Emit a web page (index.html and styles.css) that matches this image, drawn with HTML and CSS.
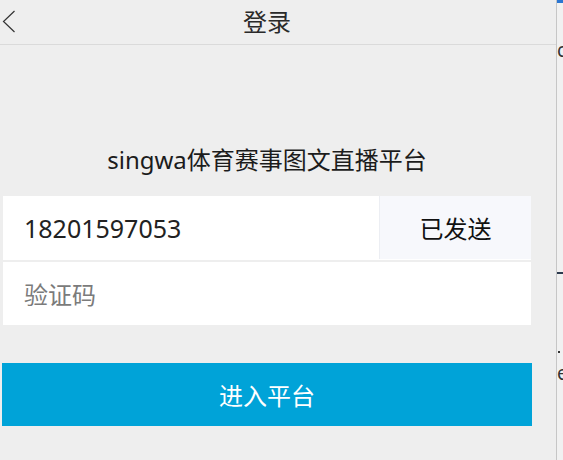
FILE: index.html
```html
<!DOCTYPE html>
<html lang="zh-CN">
<head>
<meta charset="utf-8">
<title>登录</title>
<link rel="stylesheet" href="styles.css">
</head>
<body>
<div class="screen">
  <main class="app">
    <header class="topbar">
      <div class="topbar-inner">
        <span class="back">
          <svg width="14" height="24" viewBox="0 0 14 24"><polyline points="12.5,1 1.5,11.5 12.5,22" fill="none" stroke="#333" stroke-width="1.2"/></svg>
        </span>
        <h1 class="topbar-title">登录</h1>
      </div>
    </header>
    <section class="content">
      <h2 class="brand">singwa体育赛事图文直播平台</h2>
      <div class="form">
        <div class="field field-phone">
          <span class="field-value">18201597053</span>
          <span class="send">已发送</span>
        </div>
        <div class="field field-code">
          <span class="placeholder">验证码</span>
        </div>
      </div>
      <button class="submit">进入平台</button>
    </section>
  </main>
  <div class="divider"></div>
  <aside class="side">
    <div class="side-bar"></div>
    <div class="side-c">c</div>
    <div class="side-dash"></div>
    <div class="side-dot"></div>
    <div class="side-e">e</div>
  </aside>
</div>
</body>
</html>
```

FILE: styles.css
```css
* { box-sizing: border-box; }
html, body {
  margin: 0;
  padding: 0;
  background: #efefef;
}
body {
  font-family: "Noto Sans", "Noto Sans CJK SC", sans-serif;
  color: #222;
}
.screen {
  display: flex;
  width: 563px;
  height: 460px;
  overflow: hidden;
}
.app {
  width: 556px;
  flex: none;
  background: #eeeeee;
}
.topbar {
  height: 45px;
  border-bottom: 1px solid #dadada;
}
.topbar-inner {
  width: 534px;
  height: 44px;
  display: flex;
  align-items: center;
  justify-content: center;
  position: relative;
}
.back {
  position: absolute;
  left: 2px;
  top: 10px;
  display: flex;
}
.topbar-title {
  margin: 0;
  font-size: 24px;
  font-weight: normal;
  line-height: 44px;
  color: #2a2a2a;
}
.content {
  width: 534px;
  display: flex;
  flex-direction: column;
}
.brand {
  margin: 99px 0 0;
  font-size: 24px;
  font-weight: normal;
  line-height: 32px;
  text-align: center;
  color: #1c1c1c;
}
.form {
  margin: 20px 3px 0;
  display: flex;
  flex-direction: column;
  gap: 2px;
}
.field {
  background: #fff;
  display: flex;
  align-items: center;
}
.field-phone { height: 64px; align-items: stretch; }
.field-code { height: 63px; padding-left: 21px; }
.field-value {
  flex: 1;
  padding-left: 21px;
  display: flex;
  align-items: center;
  font-size: 25px;
  color: #222;
}
.send {
  width: 152px;
  height: 63px;
  background: #f7f8fc;
  border-left: 1px solid #eceef3;
  display: flex;
  align-items: center;
  justify-content: center;
  font-size: 24px;
  color: #111;
}
.placeholder {
  font-size: 24px;
  color: #7b7b7b;
}
.submit {
  margin: 38px 2px 0;
  height: 63px;
  border: 0;
  background: #00a3d8;
  color: #fff;
  font-family: inherit;
  font-size: 24px;
  padding: 0;
}
.divider {
  width: 1px;
  flex: none;
  background: #c6c6c6;
}
.side {
  flex: 1;
  background: #f1f1f1;
  display: flex;
  flex-direction: column;
  overflow: hidden;
}
.side-bar {
  height: 3px;
  background: #2a76d2;
}
.side-c {
  margin-top: 37px;
  font-size: 19px;
  line-height: 20px;
  color: #333;
}
.side-dash {
  margin-top: 212px;
  width: 6px;
  height: 2px;
  background: #2c3a4e;
}
.side-dot {
  margin-top: 77px;
  margin-left: 1px;
  width: 2px;
  height: 2px;
  background: #333;
}
.side-e {
  margin-top: 10px;
  font-size: 19px;
  line-height: 20px;
  color: #333;
}
```
